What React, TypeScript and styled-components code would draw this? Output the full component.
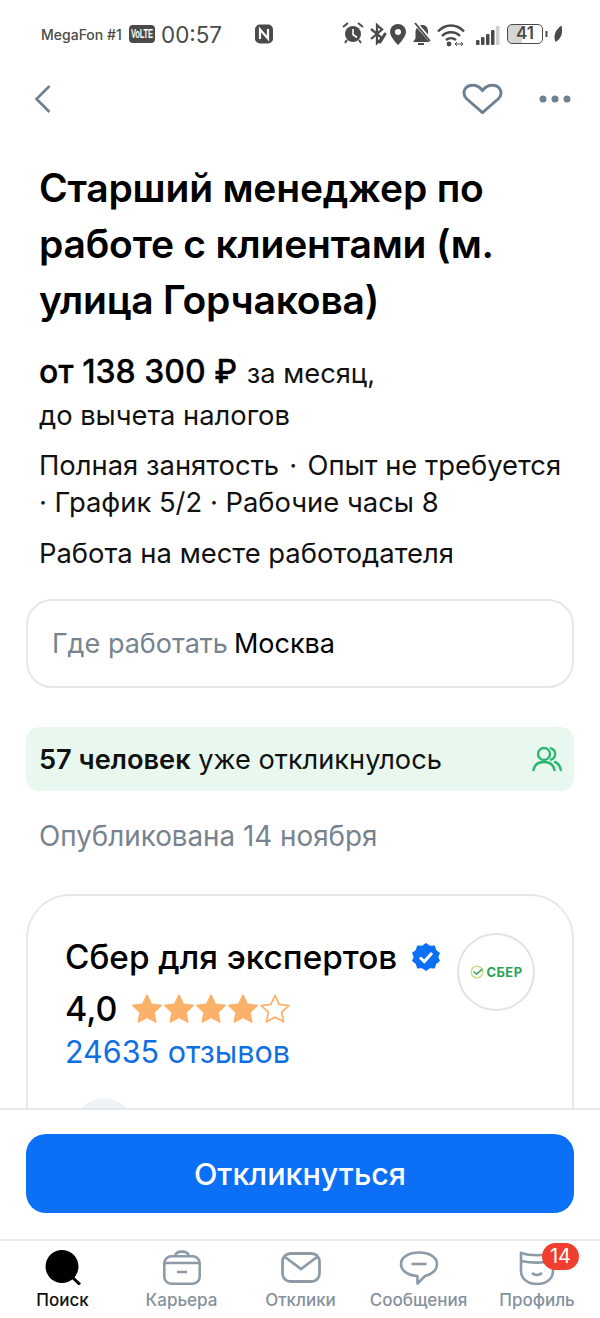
import React from "react";
import styled, { createGlobalStyle } from "styled-components";

const g = "#4a4a4a";
const gr = "#8d9aa7";
const Global = createGlobalStyle`
  html, body { margin: 0; padding: 0; background: #fff; }
  * { box-sizing: border-box; }
  body { font-family: Inter, "Liberation Sans", sans-serif; color: #000; }
`;
const Page = styled.div`
  width: 600px; height: 1318px; display: flex; flex-direction: column; overflow: hidden; background: #fff;
`;
const Status = styled.div`
  height: 68px; flex: none; display: flex; align-items: center; padding: 0 37px 0 41px; color: ${g};
`;
const Carrier = styled.span`font-size: 14px; font-weight: 500; width: 88px; white-space: nowrap;`;
const Volte = styled.span`
  width: 26px; height: 18px; border-radius: 4px; background: ${g}; color: #fff; display: flex; align-items: center; justify-content: center; overflow: hidden;
`;
const VolteText = styled.span`
  display: inline-block; font: 700 13px/18px "Liberation Sans", sans-serif; transform: scaleX(0.58); white-space: nowrap; letter-spacing: -0.3px;
`;
const Clock = styled.span`font-size: 22.4px; font-weight: 400; margin-left: 6px; width: 73px;`;
const Nfc = styled.svg`margin-left: 21px; flex: none;`;
const StatusIcons = styled.div`margin-left: auto; display: flex; align-items: center;`;
const BatteryWrap = styled.div`display: flex; align-items: center; margin-left: 7px;`;
const BatteryBody = styled.div`
  width: 36px; height: 20px; border: 1.5px solid ${g}; border-radius: 5px; background: linear-gradient(90deg, #d6d6d6 42%, #fff 42%);
  color: ${g}; font-size: 17px; font-weight: 600; line-height: 17px; text-align: center;
`;
const Header = styled.div`
  height: 62px; flex: none; display: flex; align-items: center; padding: 0 29px 0 34px;
`;
const HeaderRight = styled.div`margin-left: auto; display: flex; align-items: center; gap: 36px;`;
const Content = styled.div`flex: 1; min-height: 0; overflow: hidden; padding: 0 26px;`;
const Inset = styled.div`padding: 0 13px;`;
const Title = styled.h1`
  margin: 0; padding-top: 30px; font-size: 39px; line-height: 56px; font-weight: 600; letter-spacing: -0.2px; color: #000;
`;
const Salary = styled.div`margin-top: 23px; font-size: 27.3px; line-height: 42px; color: #111;`;
const SalaryAmount = styled.span`font-size: 32px; font-weight: 500; color: #000; margin-right: 2px; -webkit-text-stroke: 0.3px #000;`;
const Body = styled.div<{ $top: number }>`font-size: 27.4px; line-height: 37px; margin-top: ${p => p.$top}px; color: #111; white-space: nowrap;`;
const Dot = styled.span`margin: 0 2.5px;`;
const WhereBox = styled.div`
  margin-top: 27px; height: 89px; border: 2px solid #e3e8ec; border-radius: 26px; display: flex; align-items: center; padding: 0 24px; font-size: 27px;
`;
const Muted = styled.span`color: #77838f; margin-right: 6px;`;
const Replies = styled.div`
  margin-top: 39px; height: 64px; border-radius: 14px; background: #e8f8ee; display: flex; align-items: center; justify-content: space-between;
  padding: 0 12px 0 13px; font-size: 27.2px; color: #111;
`;
const Strong = styled.b`font-weight: 600;`;
const Published = styled.div`margin-top: 27px; padding-left: 13px; font-size: 27.8px; line-height: 36px; color: #77838f; white-space: nowrap;`;
const Card = styled.div`
  margin-top: 40px; height: 320px; border: 2px solid #e3e8ec; border-radius: 44px; padding: 39px 37px 0;
  display: flex; justify-content: space-between;
`;
const CardLeft = styled.div`display: flex; flex-direction: column;`;
const CompanyRow = styled.div`display: flex; align-items: center; gap: 14px; font-size: 33.3px; font-weight: 500; line-height: 44px; white-space: nowrap;`;
const RatingRow = styled.div`display: flex; align-items: center; gap: 13px; font-size: 34px; font-weight: 500; line-height: 48px; margin-top: 6px;`;
const Stars = styled.div`display: flex;`;
const Reviews = styled.div`font-size: 30.5px; line-height: 38px; color: #0f6fe3; white-space: nowrap;`;
const Logo = styled.div`
  flex: none; width: 78px; height: 78px; border: 2px solid #e3e3e3; border-radius: 50%; display: flex; align-items: center; justify-content: center; gap: 3px;
  color: #2e9f55; font-size: 13px; font-weight: 700; letter-spacing: .4px; margin: -2px 0 0 0;
`;
const Avatar = styled.div`width: 60px; height: 60px; border-radius: 50%; background: #eef3f8; margin-top: 27px; margin-left: 9px;`;
const ActionBar = styled.div`flex: none; height: 131px; border-top: 2px solid #e3e8ec; padding: 24px 26px 0; background: #fff;`;
const Apply = styled.button`
  display: block; width: 100%; height: 79px; border: 0; border-radius: 20px; background: #0b70f5; color: #fff; font: 500 30.5px Inter, sans-serif;
`;
const Tabs = styled.nav`
  flex: none; height: 79px; border-top: 2px solid #dfeceb; display: flex; background: #fff;
`;
const Tab = styled.div<{ $w: number; $active?: boolean }>`
  position: relative; width: ${p => p.$w}px; flex: none; display: flex; flex-direction: column; align-items: center;
  font-size: 17px; font-weight: 500; color: ${p => (p.$active ? "#111" : "#84919e")}; white-space: nowrap;
`;
const TabIcon = styled.div`height: 44px; display: flex; align-items: flex-end; justify-content: center; margin-bottom: 5px;`;
const Badge = styled.span`
  position: absolute; top: 2px; left: 50%; margin-left: 5px; width: 37px; height: 27px; border-radius: 14px; background: #f03e2f; color: #fff;
  font-size: 20px; font-weight: 400; line-height: 27px; text-align: center;
`;

const Star = ({ filled }: { filled: boolean }) => (
  <svg width="32" height="32" viewBox="0 0 24 24">
    <path d="M12 1.800l3.100 6.700 7.300.9-5.400 5 1.400 7.200L12 18.100l-6.400 3.500L7 14.400l-5.400-5 7.300-.9z"
      fill={filled ? "#fbb169" : "none"} stroke="#fbb169" strokeWidth={filled ? 1.4 : 1.3} strokeLinejoin="round" />
  </svg>
);

function StatusGlyphs() {
  return (
    <svg width="160" height="28" viewBox="0 0 160 28">
      <g transform="translate(3 0)">
        <circle cx="10" cy="14" r="8" fill={g} />
        <path d="M10 9v5.500l4 3" stroke="#fff" strokeWidth="1.600" fill="none" />
        <path d="M0 7l5-4M20 7l-5-4M4 20l-2 3M16 20l2 3" stroke={g} strokeWidth="2" />
      </g>
      <g transform="translate(30 0)">
        <path d="M1 9l11 9-5 5V5l5 4.500L1 19" stroke={g} strokeWidth="2.300" fill="none" />
        <path d="M10 22l5-8" stroke={g} strokeWidth="3" strokeLinecap="round" />
      </g>
      <g transform="translate(50 0)">
        <path d="M8 4a8 8 0 0 1 8 8c0 5-8 13-8 13S0 17 0 12a8 8 0 0 1 8-8z" fill={g} />
        <circle cx="8" cy="12" r="3" fill="#fff" />
      </g>
      <g transform="translate(73 0)">
        <path d="M16 22H0l2.500-3.500V12c0-2 .7-3.600 2-4.800L16 20zM7 5.500c5-1.500 8 1.500 8 6v3z" fill={g} />
        <path d="M1 4l16 18" stroke="#fff" strokeWidth="1" />
        <path d="M2 3l15 18" stroke={g} strokeWidth="1.800" />
        <path d="M5 24h6" stroke={g} strokeWidth="2" />
      </g>
      <g transform="translate(97 0)">
        <path d="M1 11.500c7.500-8 18.500-8 26 0M5 16c5-5 13-5 18 0M9 20c3-2.500 7-2.500 10 0" fill="none" stroke={g} strokeWidth="2.400" />
        <circle cx="12" cy="24" r="2.400" fill={g} />
        <path d="M18 24h8M20 22l-2 2 2 2M24 22l2 2-2 2" stroke={g} strokeWidth="1" fill="none" />
      </g>
      <rect x="136" y="20" width="3.500" height="5" rx="1" fill={g} />
      <rect x="141" y="17" width="3.500" height="8" rx="1" fill={g} />
      <rect x="146" y="14" width="3.500" height="11" rx="1" fill={g} />
      <rect x="151" y="10" width="3.500" height="15" rx="1" fill={g} />
      <rect x="156" y="6" width="3.500" height="19" fill="#cfcfcf" />
    </svg>
  );
}

export default function App() {
  return (
    <Page>
      <Global />
      <Status>
        <Carrier>MegaFon #1</Carrier>
        <Volte><VolteText>VoLTE</VolteText></Volte>
        <Clock>00:57</Clock>
        <Nfc width="18" height="20" viewBox="0 0 18 20">
          <rect x="0" y="0.500" width="18" height="19" rx="5" fill={g} />
          <path d="M5 15V5.500l8 9V5" fill="none" stroke="#fff" strokeWidth="2.200" />
        </Nfc>
        <StatusIcons>
          <StatusGlyphs />
          <BatteryWrap>
            <BatteryBody>41</BatteryBody>
            <svg width="20" height="18" viewBox="0 0 20 18">
              <rect x="2.500" y="6" width="2" height="6" fill={g} />
              <path d="M18.500 .5c1.500 6 .5 13-6 16.500-2.500-6-.5-12 6-16.500z" fill={g} />
            </svg>
          </BatteryWrap>
        </StatusIcons>
      </Status>
      <Header>
        <svg width="18" height="30" viewBox="0 0 18 30">
          <path d="M15.500 2L2.500 15l13 13" fill="none" stroke="#6f8091" strokeWidth="2.600" />
        </svg>
        <HeaderRight>
          <svg width="41" height="32" viewBox="0 0 42 32">
            <path d="M21 30L5 16C-1 10 3 2 11 2c4.500 0 7.500 2 10 5.500C23.500 4 26.500 2 31 2c8 0 12 8 6 14z" fill="none" stroke="#6f8091" strokeWidth="3" strokeLinejoin="round" />
          </svg>
          <svg width="32" height="8" viewBox="0 0 32 8">
            <circle cx="4" cy="4" r="3.500" fill="#6f8091" />
            <circle cx="16" cy="4" r="3.500" fill="#6f8091" />
            <circle cx="28" cy="4" r="3.500" fill="#6f8091" />
          </svg>
        </HeaderRight>
      </Header>
      <Content>
        <Inset>
          <Title>Старший менеджер по работе с клиентами (м. улица Горчакова)</Title>
          <Salary><SalaryAmount>от 138 300 ₽</SalaryAmount> за месяц,<br />до вычета налогов</Salary>
          <Body $top={10}>Полная занятость <Dot>·</Dot> Опыт не требуется<br />· График 5/2 · Рабочие часы 8</Body>
          <Body $top={14}>Работа на месте работодателя</Body>
        </Inset>
        <WhereBox><Muted>Где работать</Muted> Москва</WhereBox>
        <Replies>
          <span><Strong>57 человек</Strong> уже откликнулось</span>
          <svg width="30" height="26" viewBox="0 0 30 26">
            <circle cx="12" cy="8" r="6" fill="none" stroke="#2bb673" strokeWidth="2.400" />
            <path d="M1.500 24c1-5.500 5-8 10.500-8s9.500 2.500 10.500 8M19 2.300a6 6 0 0 1 0 11.400M23 16c3 1 5 4 5.800 8" fill="none" stroke="#2bb673" strokeWidth="2.400" strokeLinecap="round" />
          </svg>
        </Replies>
        <Published>Опубликована 14 ноября</Published>
        <Card>
          <CardLeft>
            <CompanyRow>
              Сбер для экспертов
              <svg width="30" height="30" viewBox="0 0 30 30">
                <path d="M15 1l4 2.800 4.800-.3 1.400 4.600 3.800 3-1.700 3.900 1.700 4-3.800 2.900-1.400 4.600-4.800-.3-4 2.800-4-2.800-4.800.3-1.400-4.600-3.800-2.900 1.700-4L1 11.100l3.800-3 1.400-4.600 4.800.3z" fill="#0b70f5" />
                <path d="M9 15.500l4.300 4L21 11" fill="none" stroke="#fff" strokeWidth="3" />
              </svg>
            </CompanyRow>
            <RatingRow>
              4,0
              <Stars>
                <Star filled /><Star filled /><Star filled /><Star filled /><Star filled={false} />
              </Stars>
            </RatingRow>
            <Reviews>24635 отзывов</Reviews>
            <Avatar />
          </CardLeft>
          <Logo>
            <svg width="14" height="14" viewBox="0 0 14 14">
              <circle cx="7" cy="7" r="5.800" fill="none" stroke="#c9dd8f" strokeWidth="1.500" />
              <path d="M3.500 6.500l3 2.500 6-5" fill="none" stroke="#2e9f55" strokeWidth="1.500" />
            </svg>
            СБЕР
          </Logo>
        </Card>
      </Content>
      <ActionBar><Apply>Откликнуться</Apply></ActionBar>
      <Tabs>
        <Tab $w={125} $active>
          <TabIcon>
            <svg width="38" height="35" viewBox="0 0 38 35">
              <circle cx="18" cy="16.500" r="16.500" fill="#000" />
              <path d="M28 27l8 7.500" stroke="#000" strokeWidth="3" />
            </svg>
          </TabIcon>
          Поиск
        </Tab>
        <Tab $w={113}>
          <TabIcon>
            <svg width="40" height="35" viewBox="0 0 40 35">
              <rect x="2.300" y="6.300" width="35.400" height="27.400" rx="7" fill="none" stroke={gr} strokeWidth="2.600" />
              <path d="M2.500 13h35M13 6.300C14 0 26 0 27 6.300M15 22h10" fill="none" stroke={gr} strokeWidth="2.600" />
            </svg>
          </TabIcon>
          Карьера
        </Tab>
        <Tab $w={125}>
          <TabIcon>
            <svg width="40" height="33" viewBox="0 0 40 33">
              <rect x="1.500" y="1.500" width="37" height="28" rx="8" fill="none" stroke={gr} strokeWidth="2.800" />
              <path d="M4 5l16 12L36 5" fill="none" stroke={gr} strokeWidth="2.800" />
            </svg>
          </TabIcon>
          Отклики
        </Tab>
        <Tab $w={111}>
          <TabIcon>
            <svg width="40" height="34" viewBox="0 0 40 34">
              <path d="M20 1.500c10 0 18 4.500 18 11.500s-7 11-12 12l-7.500 7.500V25C9 24.500 2 20 2 13S10 1.500 20 1.500z" fill="none" stroke={gr} strokeWidth="2.600" strokeLinejoin="round" />
              <path d="M12.500 13h15" stroke={gr} strokeWidth="2.600" />
            </svg>
          </TabIcon>
          Сообщения
        </Tab>
        <Tab $w={126}>
          <TabIcon>
            <svg width="36" height="35" viewBox="0 0 36 35">
              <path d="M2 3c9 3 22 3 32 0v18c0 8-7 13-16 13S2 29 2 21z" fill="none" stroke={gr} strokeWidth="2.600" />
              <path d="M2 11c10 2 22 2 32 0M13 23c3 2.500 7 2.500 10 0" fill="none" stroke={gr} strokeWidth="2.600" />
            </svg>
          </TabIcon>
          Профиль
          <Badge>14</Badge>
        </Tab>
      </Tabs>
    </Page>
  );
}
